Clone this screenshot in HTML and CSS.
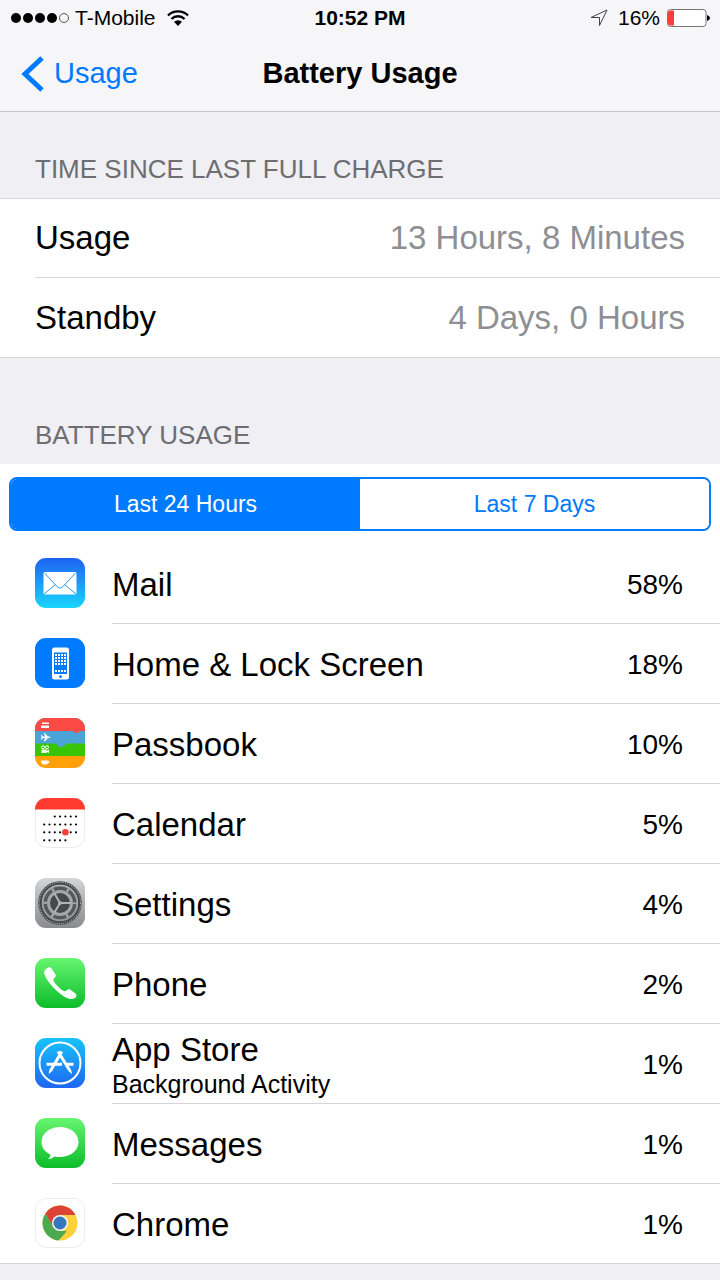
FILE: index.html
```html
<!DOCTYPE html>
<html lang="en">
<head>
  <meta charset="UTF-8">
  <meta name="viewport" content="width=device-width, initial-scale=1.0">
  <title>Battery Usage</title>
  <link rel="stylesheet" href="styles.css">
</head>
<body>

<header class="top">
  <div class="status">
    <div class="status-left">
      <svg class="signal" width="60" height="12" viewBox="0 0 60 12">
        <circle cx="6" cy="6" r="5"/>
        <circle cx="18" cy="6" r="5"/>
        <circle cx="30" cy="6" r="5"/>
        <circle cx="42" cy="6" r="5"/>
        <circle cx="54" cy="6" r="4.5" fill="none" stroke="#555"/>
      </svg>
      <span>T-Mobile</span>
      <svg class="wifi" width="22" height="16" viewBox="0 0 22 16">
        <path d="M1 5.5a14.2 14.2 0 0 1 20 0M4.500 9a9.2 9.2 0 0 1 13 0" fill="none" stroke="#000" stroke-width="2.4"/>
        <path d="M7 11.8a5.7 5.7 0 0 1 8 0L11 16z"/>
      </svg>
    </div>
    <div class="clock">10:52 PM</div>
    <div class="status-right">
      <svg width="18" height="18" viewBox="0 0 18 18">
        <path d="M1 8.5L17 1L9.5 16.5V8.5z" fill="none" stroke="#444"/>
      </svg>
      <span class="charge">16%</span>
      <svg width="44" height="18" viewBox="0 0 44 18">
        <rect x="1.500" y="0.5" width="38.500" height="17" rx="3" fill="#fff" stroke="#777"/>
        <path d="M2 3.5a2 2 0 0 1 2-2h4v15H4a2 2 0 0 1-2-2z" fill="#fc3d39"/>
        <path d="M41 6q3 1 3 3t-3 3z"/>
      </svg>
    </div>
  </div>
  <nav class="nav">
    <a class="back" href="#">
      <svg width="24" height="36" viewBox="0 0 24 36"><path d="M22 2L5 18L22 34" fill="none" stroke="#007aff" stroke-width="5"/></svg>
      <span>Usage</span>
    </a>
    <h1>Battery Usage</h1>
  </nav>
</header>

<main>
  <h2>TIME SINCE LAST FULL CHARGE</h2>
  <dl class="times">
    <div class="time"><dt>Usage</dt><dd>13 Hours, 8 Minutes</dd></div>
    <div class="time"><dt>Standby</dt><dd>4 Days, 0 Hours</dd></div>
  </dl>

  <h2 class="second">BATTERY USAGE</h2>
  <section class="apps">
    <div class="segments">
      <button class="segment active" type="button">Last 24 Hours</button>
      <button class="segment" type="button">Last 7 Days</button>
    </div>
    <ul>
      <li>
        <svg class="icon" viewBox="0 0 50 50">
          <defs><linearGradient id="mail" x2="0" y2="1"><stop stop-color="#1d62f0"/><stop offset="1" stop-color="#19d5fd"/></linearGradient></defs>
          <rect width="50" height="50" rx="11" fill="url(#mail)"/>
          <rect x="8.5" y="14" width="33" height="22.5" rx="1" fill="#fff"/>
          <path d="M9 14.5L22.5 29q2.5 2.5 5 0L41 14.5M9 36L20.5 26.5M41 36L29.5 26.5" fill="none" stroke="#2b9af5"/>
        </svg>
        <div class="row"><div class="name">Mail</div><div class="percent">58%</div></div>
      </li>
      <li>
        <svg class="icon" viewBox="0 0 50 50">
          <rect width="50" height="50" rx="11" fill="#007aff"/>
          <rect x="17" y="9.5" width="17" height="32" rx="2.5" fill="#fff"/>
          <rect x="19" y="14.5" width="13" height="21.5" fill="#007aff"/>
          <path d="M20 17h12M20 20h12M20 23h12M20 26h12M20 33h12" stroke="#fff" stroke-width="2" stroke-dasharray="2 1"/>
          <circle cx="25.5" cy="38.7" r="1.4" fill="#007aff"/>
        </svg>
        <div class="row"><div class="name">Home &amp; Lock Screen</div><div class="percent">18%</div></div>
      </li>
      <li>
        <svg class="icon" viewBox="0 0 50 50">
          <defs><clipPath id="round"><rect width="50" height="50" rx="11"/></clipPath></defs>
          <g clip-path="url(#round)">
            <rect width="50" height="50" fill="#ff9f0a"/>
            <rect width="50" height="38" fill="#39c404"/>
            <path d="M0 0h50v25.5H31c-1 0-1 3.5-5 3.5s-4-3.5-5-3.5H0z" fill="#4ba3d8"/>
            <path d="M0 0h50v13h-5c-1 0-1 2-3.5 2s-2.5-2-3.5-2H0z" fill="#fb4a45"/>
          </g>
          <path d="M7 4.5h7v1.5H7zM6 7.5h8v2.5H6z" fill="#fff"/>
          <path d="M6 17l1 .2 1 1.3h2L8.8 15.3h1.3l2.8 3.2h1.6a.8.8 0 0 1 0 1.6h-1.6l-2.8 3.2H8.8l1.2-3.2H8l-1 1.3H6l.6-2.1z" fill="#fff"/>
          <circle cx="8" cy="29.3" r="1.5" fill="none" stroke="#fff"/>
          <circle cx="12" cy="29.3" r="1.5" fill="none" stroke="#fff"/>
          <path d="M6.5 31.5h5v3.5h-5zM11.5 33l2.5-1.5V35l-2.5-1z" fill="#fff"/>
          <path d="M6 42.5h7.5q0 3-2 4H8q-2-1-2-4zM13 43.5h1.5v1.5H13z" fill="#fff"/>
        </svg>
        <div class="row"><div class="name">Passbook</div><div class="percent">10%</div></div>
      </li>
      <li>
        <svg class="icon" viewBox="0 0 50 50">
          <rect x="0.5" y="0.5" width="49" height="49" rx="11" fill="#fff" stroke="#ececec"/>
          <path d="M0 11.5V11A11 11 0 0 1 11 0h28a11 11 0 0 1 11 11v.5z" fill="#ff3b30"/>
          <g fill="none" stroke="#000" stroke-width="2.2" stroke-linecap="round" stroke-dasharray="0 5.3">
            <path d="M19.8 18.5H41.5"/>
            <path d="M9.2 26.5H41.5"/>
            <path d="M9.2 34.3H41.5"/>
            <path d="M9.2 42.3H31"/>
          </g>
          <circle cx="30.4" cy="34.3" r="3.3" fill="#fb3e36"/>
        </svg>
        <div class="row"><div class="name">Calendar</div><div class="percent">5%</div></div>
      </li>
      <li>
        <svg class="icon" viewBox="0 0 50 50">
          <defs><linearGradient id="settings" x2="0" y2="1"><stop stop-color="#d4d5d7"/><stop offset="1" stop-color="#898a8d"/></linearGradient></defs>
          <rect width="50" height="50" rx="11" fill="url(#settings)"/>
          <g fill="none">
            <circle cx="25" cy="25" r="20" stroke="#47484b" stroke-width="3.5"/>
            <circle cx="25" cy="25" r="20.7" stroke="#a9aaac" stroke-width="1.2" stroke-dasharray="1 1.17"/>
            <circle cx="25" cy="25" r="17" fill="#56575a" stroke="#9a9b9e" stroke-width="1.2"/>
            <circle cx="25" cy="25" r="11.5" fill="#47484b" stroke="#a5a6a9" stroke-width="3"/>
            <circle cx="25" cy="25" r="14.7" stroke="#a5a6a9" stroke-width="3.5" stroke-dasharray="2.4 12.99" stroke-dashoffset="1.2"/>
            <path d="M25 25H36M25 25L19.5 15.5M25 25L19.5 34.5" stroke="#b2b3b6" stroke-width="2"/>
          </g>
          <circle cx="25" cy="25" r="2" fill="#b2b3b6"/>
        </svg>
        <div class="row"><div class="name">Settings</div><div class="percent">4%</div></div>
      </li>
      <li>
        <svg class="icon" viewBox="0 0 50 50">
          <defs><linearGradient id="green" x2="0" y2="1"><stop stop-color="#67f56f"/><stop offset="1" stop-color="#0cbd2a"/></linearGradient></defs>
          <rect width="50" height="50" rx="11" fill="url(#green)"/>
          <path d="M11.5 10.5C13.5 8.5 15.3 9 16.5 10.5L20.5 16.5C21.5 18.5 19.5 19.8 18.5 21C17.5 22.5 21 26.5 23.5 29C26 31.5 29 34 30.5 33C32 32 33.2 30.5 35 31.5L40.5 35.5C42.3 37 41.5 38.5 40 40C36 43 29 39.5 22 33C15 26.5 8 17 9.3 13.5C9.7 12.3 10.5 11.3 11.5 10.5Z" fill="#fff"/>
        </svg>
        <div class="row"><div class="name">Phone</div><div class="percent">2%</div></div>
      </li>
      <li>
        <svg class="icon" viewBox="0 0 50 50">
          <defs><linearGradient id="store" x2="0" y2="1"><stop stop-color="#18c3fb"/><stop offset="1" stop-color="#1e66f0"/></linearGradient></defs>
          <rect width="50" height="50" rx="11" fill="url(#store)"/>
          <g fill="none" stroke="#fff">
            <circle cx="25" cy="25" r="20.5" stroke-width="2"/>
            <path d="M11.5 26.3H27M32 26.3H38.5" stroke-width="3"/>
            <path d="M26.8 13.5L16 32M23 13.5L34.5 32" stroke-width="3"/>
          </g>
          <path d="M14.5 31L17.6 32.8L13.6 36zM33 32.8L36 31L37 36z" fill="#fff"/>
        </svg>
        <div class="row"><div class="name">App Store<small>Background Activity</small></div><div class="percent">1%</div></div>
      </li>
      <li>
        <svg class="icon" viewBox="0 0 50 50">
          <rect width="50" height="50" rx="11" fill="url(#green)"/>
          <path d="M25 9C35.5 9 43.5 15.5 43.5 24S35.5 39 25 39Q22 39 19.5 38.4Q17 41 13 41Q15.5 39.5 15.5 36.7C10 34 6.5 29.5 6.5 24C6.5 15.5 14.5 9 25 9Z" fill="#fff"/>
        </svg>
        <div class="row"><div class="name">Messages</div><div class="percent">1%</div></div>
      </li>
      <li>
        <svg class="icon" viewBox="0 0 50 50">
          <rect x="0.5" y="0.5" width="49" height="49" rx="11" fill="#fff" stroke="#ececec"/>
          <circle cx="25" cy="25" r="17.5" fill="#fdd13a"/>
          <path d="M10.3 15.5A17.5 17.5 0 0 1 40.5 17H25L18 29z" fill="#dd4236"/>
          <path d="M10.3 15.5L18.1 29L25 33H31.9L23.5 42.44A17.5 17.5 0 0 1 10.3 15.5z" fill="#4ca851"/>
          <circle cx="25" cy="25" r="8" fill="#f3f3f3"/>
          <circle cx="25" cy="25" r="6.5" fill="#3576bf"/>
        </svg>
        <div class="row"><div class="name">Chrome</div><div class="percent">1%</div></div>
      </li>
    </ul>
  </section>
</main>

</body>
</html>
```
FILE: styles.css
```css
* {
  box-sizing: border-box;
}

body {
  margin: 0;
  min-height: 100vh;
  font-family: "Liberation Sans", Arial, sans-serif;
  background-color: #efeff4;
  color: #000;
}

h1, h2, dl, dd, ul {
  margin: 0;
  padding: 0;
}

svg {
  display: block;
  flex-shrink: 0;
}

/* Status bar and navigation */
.top {
  background-color: #f6f6f8;
  border-bottom: 1px solid #c4c4c8;
}

.status {
  display: grid;
  grid-template-columns: 1fr auto 1fr;
  align-items: center;
  height: 36px;
  padding: 0 10px;
  font-size: 21px;
}

.status-left, .status-right {
  display: flex;
  align-items: center;
}

.status-left {
  gap: 5px;
}

.wifi {
  margin-left: 6px;
}

.status-right {
  justify-content: flex-end;
  gap: 6px;
}

.charge {
  margin-left: 4px;
}

.clock {
  font-weight: bold;
}

.nav {
  display: grid;
  grid-template-columns: 1fr auto 1fr;
  align-items: center;
  height: 75px;
  padding: 0 20px;
}

.back {
  display: flex;
  align-items: center;
  gap: 10px;
  font-size: 29px;
  color: #007aff;
  text-decoration: none;
}

h1 {
  font-size: 29px;
}

/* Grouped lists */
h2 {
  padding: 42px 35px 14px;
  font-size: 26px;
  line-height: 30px;
  font-weight: normal;
  color: #6d6d72;
}

.second {
  padding-top: 62px;
}

.times {
  padding-left: 35px;
  background-color: #fff;
  border-top: 1px solid #d5d5d9;
  border-bottom: 1px solid #d5d5d9;
}

.time {
  display: flex;
  align-items: center;
  justify-content: space-between;
  height: 78px;
  padding-right: 35px;
  font-size: 33px;
}

.time + .time {
  height: 80px;
  border-top: 1px solid #d5d5d9;
}

.time dd {
  color: #8e8e93;
}

.apps {
  padding-top: 13px;
  background-color: #fff;
  border-bottom: 1px solid #d5d5d9;
}

.segments {
  display: flex;
  margin: 0 9px 13px;
  border: 2px solid #007aff;
  border-radius: 8px;
  overflow: hidden;
}

.segment {
  flex: 1;
  height: 50px;
  border: none;
  background-color: #fff;
  color: #007aff;
  font-family: inherit;
  font-size: 23px;
}

.segment.active {
  background-color: #007aff;
  color: #fff;
}

li {
  display: flex;
  gap: 27px;
  padding-left: 35px;
}

.icon {
  width: 50px;
  height: 50px;
  margin-top: 14px;
}

.row {
  display: flex;
  flex: 1;
  align-items: center;
  justify-content: space-between;
  height: 80px;
  padding-top: 2px;
  padding-right: 37px;
  border-bottom: 1px solid #d5d5d9;
}

li:last-child .row {
  height: 79px;
  border-bottom: none;
}

.name {
  font-size: 33px;
  line-height: 38px;
}

.name small {
  display: block;
  font-size: 25px;
  line-height: 30px;
}

.percent {
  font-size: 28px;
}
```
